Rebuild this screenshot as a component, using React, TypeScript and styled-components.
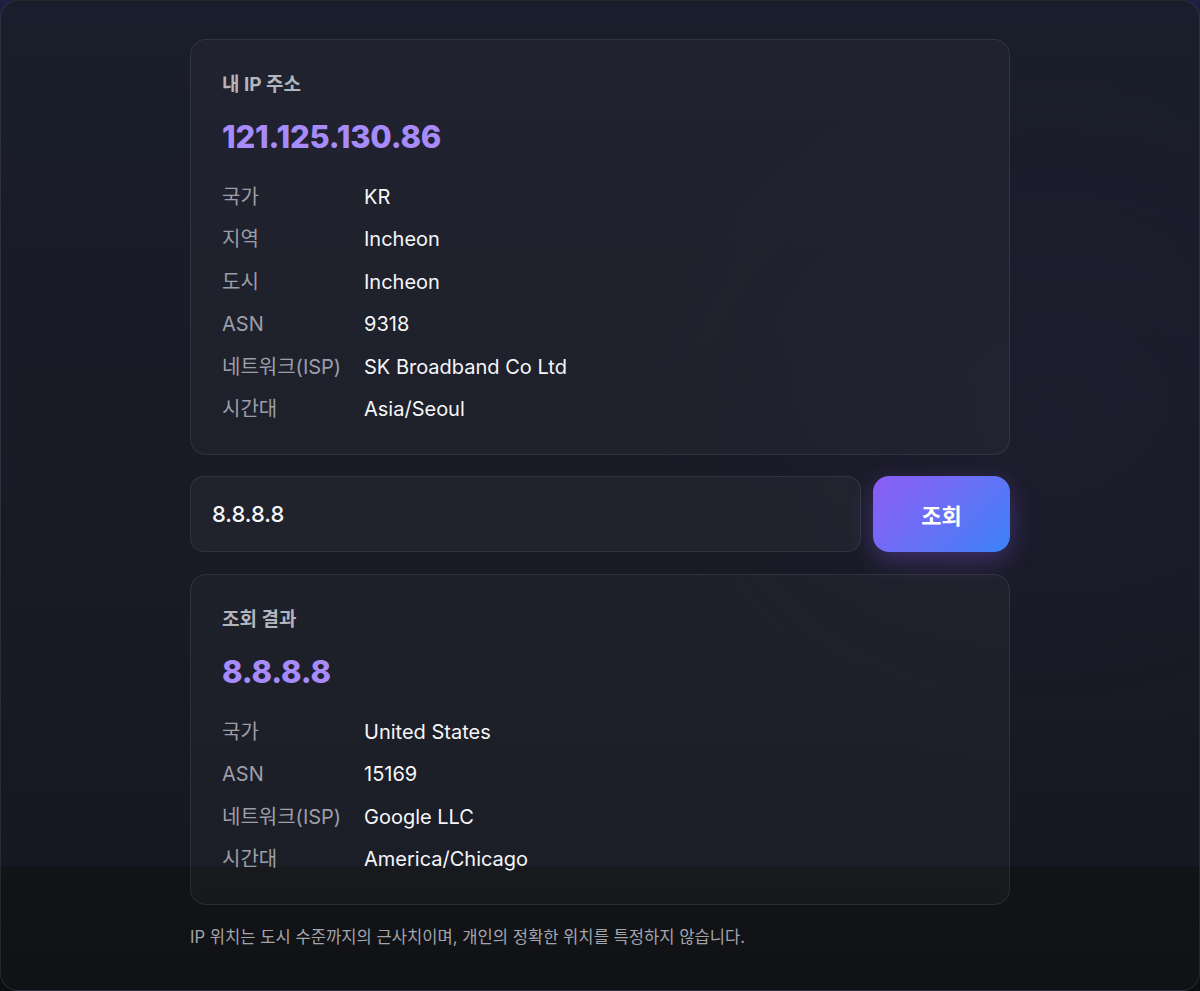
import React from "react";
import styled, { createGlobalStyle } from "styled-components";

const Global = createGlobalStyle`
  html, body { margin: 0; padding: 0; }
  body {
    background: linear-gradient(180deg, #1b2040 0%, #141729 60%, #0d0e12 100%);
    font-family: "Inter", "Noto Sans CJK KR", sans-serif;
    -webkit-font-smoothing: antialiased;
  }
  * { box-sizing: border-box; }
`;

const Frame = styled.div`
  width: 1200px;
  height: 991px;
  border: 1px solid rgba(255, 255, 255, 0.09);
  border-radius: 18px;
  overflow: hidden;
  background:
    radial-gradient(ellipse 600px 500px at 1050px 420px, rgba(70, 50, 110, 0.1), transparent 70%),
    linear-gradient(180deg, #1a1d2b 0px, #181a25 500px, #161821 865px, #121316 866px, #111215 991px);
  display: flex;
  justify-content: center;
`;

const Column = styled.main`
  width: 820px;
  padding-top: 38px;
  display: flex;
  flex-direction: column;
`;

const Card = styled.section`
  border: 1px solid rgba(255, 255, 255, 0.08);
  border-radius: 16px;
  background: rgba(255, 255, 255, 0.028);
  padding: 31px 31px 30px;
`;

const Title = styled.h2`
  margin: 0;
  font-size: 19px;
  line-height: 27px;
  font-weight: 700;
  color: #b3b5bd;
`;

const Ip = styled.div`
  margin-top: 15px;
  font-size: 31px;
  line-height: 48px;
  font-weight: 800;
  color: #a78bfa;
  letter-spacing: -0.2px;
`;

const Rows = styled.dl`
  margin: 21px 0 0;
  display: grid;
  grid-template-columns: 142px 1fr;
  row-gap: 12.4px;
`;

const Label = styled.dt`
  margin: 0;
  font-size: 20px;
  line-height: 30px;
  color: #9c9ea8;
`;

const Value = styled.dd`
  margin: 0;
  font-size: 20px;
  line-height: 30px;
  color: #f5f6f8;
  font-weight: 400;
`;

const SearchRow = styled.form`
  margin: 21.5px 0;
  display: flex;
  gap: 12px;
  height: 76px;
`;

const Input = styled.input`
  flex: 1;
  height: 76px;
  border: 1px solid rgba(255, 255, 255, 0.08);
  border-radius: 14px;
  background: rgba(255, 255, 255, 0.035);
  padding: 0 21px;
  font-family: inherit;
  font-size: 22px;
  font-weight: 500;
  color: #f5f6f8;
  outline: none;
`;

const Button = styled.button`
  width: 137px;
  height: 76px;
  border: none;
  border-radius: 16px;
  background: linear-gradient(135deg, #8b5cf6 0%, #6d6ef7 45%, #3b82f6 100%);
  box-shadow: 0 8px 26px rgba(139, 92, 246, 0.32);
  color: #ffffff;
  font-family: inherit;
  font-size: 22px;
  font-weight: 700;
  cursor: pointer;
`;

const Note = styled.p`
  margin: 20px 0 0;
  font-size: 16.6px;
  line-height: 24px;
  color: #a3a5ad;
`;

type Row = [string, string];

const InfoCard = ({ title, ip, rows }: { title: string; ip: string; rows: Row[] }) => (
  <Card>
    <Title>{title}</Title>
    <Ip>{ip}</Ip>
    <Rows>
      {rows.map(([k, v]) => (
        <React.Fragment key={k}>
          <Label>{k}</Label>
          <Value>{v}</Value>
        </React.Fragment>
      ))}
    </Rows>
  </Card>
);

export default function App() {
  return (
    <>
      <Global />
      <Frame>
        <Column>
          <InfoCard
            title="내 IP 주소"
            ip="121.125.130.86"
            rows={[
              ["국가", "KR"],
              ["지역", "Incheon"],
              ["도시", "Incheon"],
              ["ASN", "9318"],
              ["네트워크(ISP)", "SK Broadband Co Ltd"],
              ["시간대", "Asia/Seoul"],
            ]}
          />
          <SearchRow onSubmit={(e) => e.preventDefault()}>
            <Input defaultValue="8.8.8.8" />
            <Button type="submit">조회</Button>
          </SearchRow>
          <InfoCard
            title="조회 결과"
            ip="8.8.8.8"
            rows={[
              ["국가", "United States"],
              ["ASN", "15169"],
              ["네트워크(ISP)", "Google LLC"],
              ["시간대", "America/Chicago"],
            ]}
          />
          <Note>IP 위치는 도시 수준까지의 근사치이며, 개인의 정확한 위치를 특정하지 않습니다.</Note>
        </Column>
      </Frame>
    </>
  );
}
